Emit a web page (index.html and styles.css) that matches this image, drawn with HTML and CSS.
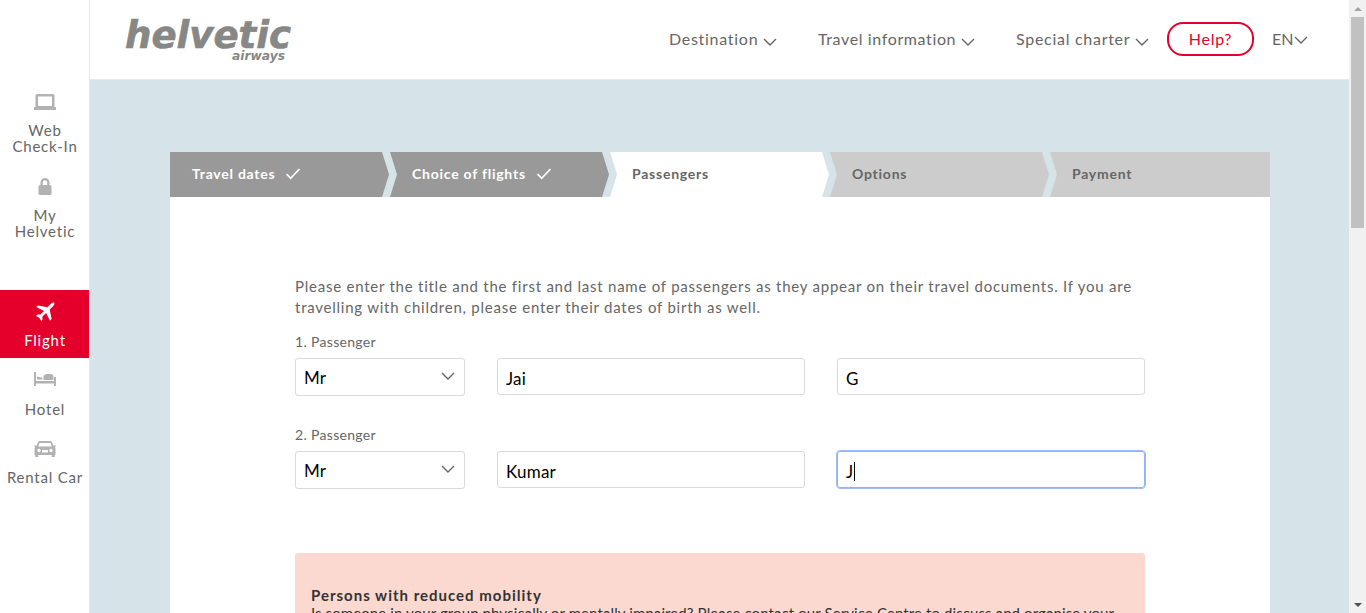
FILE: index.html
```html
<!DOCTYPE html>
<html lang="en">
<head>
<meta charset="utf-8">
<title>Helvetic Airways – Passengers</title>
<link rel="stylesheet" href="styles.css">
</head>
<body>
<div class="app">
  <nav class="sidebar">
    <a class="side-item checkin">
      <svg width="22" height="16" viewBox="0 0 22 16"><path fill="#b2b2b2" fill-rule="evenodd" d="M3 0h16q1.500 0 1.500 1.500V13H22v3H0v-3h1.500V1.500Q1.500 0 3 0zM4 2.500V12h14V2.500z"/></svg>
      <span>Web<br>Check-In</span>
    </a>
    <a class="side-item account">
      <svg width="14" height="17" viewBox="0 0 14 17"><path fill="#b2b2b2" fill-rule="evenodd" d="M2.500 7V4.500a4.500 4.500 0 0 1 9 0V7h.5q1.500 0 1.500 1.500v7Q13.500 17 12 17H2Q.5 17 .5 15.500v-7Q.5 7 2 7zm2.300 0h4.400V4.500a2.200 2.200 0 0 0-4.400 0z"/></svg>
      <span>My<br>Helvetic</span>
    </a>
    <a class="side-item flight">
      <svg width="20" height="20" viewBox="0 0 20 20"><path fill="#fff" d="M19.200.7c.6.8-.2 2.500-1.200 3.600L14.700 7.600l1.900 9.500-1.600 1.600-3.900-7.700-3.700 3.600.1 3-1.300 1.500-1.900-3.300L1 13.900l1.400-1.400 3 .1 3.700-3.700L1.300 5l1.600-1.600 9.500 1.900L15.700 2c1.100-1 2.700-1.900 3.500-1.300z"/></svg>
      <span>Flight</span>
    </a>
    <a class="side-item hotel">
      <svg width="22" height="14" viewBox="0 0 22 14"><path fill="#b2b2b2" d="M0 0h2v9h18V5h2v9h-2v-2.500H2V14H0zM3 4.500l5.500 1.300V7.500H3zM9.500 8V4Q10.500 2 13 2h3.500q3 0 3 3v3z"/></svg>
      <span>Hotel</span>
    </a>
    <a class="side-item rental">
      <svg width="22" height="16" viewBox="0 0 22 16"><path fill="#b2b2b2" fill-rule="evenodd" d="M6 0h10q1.500 0 2 1.300L19.400 4.500H22L21 6.500q.5.700.5 2V14h-.8v2h-3v-2H4.300v2h-3v-2H.5V8.500q0-1.300.5-2L0 4.500h2.600L4 1.300Q4.500 0 6 0zM5.500 2 4.300 5.500h13.400L16.500 2zM5 7.800a1.700 1.700 0 1 0 .01 0zM17 7.800a1.700 1.700 0 1 0 .01 0zM8 9v2.500h6V9z"/></svg>
      <span>Rental Car</span>
    </a>
  </nav>

  <div class="page">
    <header class="topbar">
      <svg class="logo" width="170" height="46" viewBox="0 0 170 46">
        <text class="logo-name" x="0" y="30" textLength="166" lengthAdjust="spacingAndGlyphs">helvetic</text>
        <text class="logo-sub" x="107" y="42" textLength="53" lengthAdjust="spacingAndGlyphs">airways</text>
      </svg>
      <nav class="menu">
        <a class="menu-destination">Destination</a>
        <svg class="chev chev-a" width="14" height="8" viewBox="0 0 14 8"><path d="M1 1l6 6 6-6"/></svg>
        <a class="menu-info">Travel information</a>
        <svg class="chev chev-b" width="14" height="8" viewBox="0 0 14 8"><path d="M1 1l6 6 6-6"/></svg>
        <a class="menu-charter">Special charter</a>
        <svg class="chev chev-c" width="14" height="8" viewBox="0 0 14 8"><path d="M1 1l6 6 6-6"/></svg>
        <a class="help">Help?</a>
        <a class="menu-lang">EN</a>
        <svg class="chev chev-d" width="14" height="8" viewBox="0 0 14 8"><path d="M1 1l6 6 6-6"/></svg>
      </nav>
    </header>

    <main class="card">
      <ol class="steps">
        <li class="step done first"><span>Travel dates</span><svg width="16" height="12" viewBox="0 0 16 12"><path d="M1.500 6 5.700 10.300 14.500 1"/></svg></li>
        <li class="step done"><span>Choice of flights</span><svg width="16" height="12" viewBox="0 0 16 12"><path d="M1.500 6 5.700 10.300 14.500 1"/></svg></li>
        <li class="step current"><span>Passengers</span></li>
        <li class="step"><span>Options</span></li>
        <li class="step last"><span>Payment</span></li>
      </ol>

      <form class="form">
        <p class="intro">Please enter the title and the first and last name of passengers as they appear on their travel documents. If you are<br>travelling with children, please enter their dates of birth as well.</p>
        <div class="label">1. Passenger</div>
        <div class="row">
          <div class="field select">Mr<svg class="chev" width="14" height="8" viewBox="0 0 14 8"><path d="M1 1l6 6 6-6"/></svg></div>
          <div class="field">Jai</div>
          <div class="field">G</div>
        </div>
        <div class="label second">2. Passenger</div>
        <div class="row">
          <div class="field select">Mr<svg class="chev" width="14" height="8" viewBox="0 0 14 8"><path d="M1 1l6 6 6-6"/></svg></div>
          <div class="field">Kumar</div>
          <div class="field focused">J<i class="caret"></i></div>
        </div>
        <section class="notice">
          <h2>Persons with reduced mobility</h2>
          <p>Is someone in your group physically or mentally impaired? Please contact our Service Centre to discuss and organise your</p>
        </section>
      </form>
    </main>
  </div>

  <div class="scrollbar">
    <svg width="8" height="4" viewBox="0 0 8 4"><path fill="#a3a3a3" d="M0 4l4-4 4 4z"/></svg>
    <div class="thumb"></div>
    <svg class="down" width="8" height="4" viewBox="0 0 8 4"><path fill="#505050" d="M0 0l4 4 4-4z"/></svg>
  </div>
</div>
</body>
</html>
```
FILE: styles.css
```css
* { box-sizing: border-box; }
body {
  margin: 0;
  overflow: hidden;
  font-family: Lato, "Liberation Sans", sans-serif;
  color: #666;
}
.app { display: flex; height: 613px; overflow: hidden; background: #fff; }

/* Sidebar */
.sidebar {
  width: 90px;
  flex: none;
  padding-top: 80px;
  border-right: 1px solid #e6e9ea;
  display: flex;
  flex-direction: column;
}
.side-item {
  display: flex;
  flex-direction: column;
  align-items: center;
  text-align: center;
  font-size: 15px;
  line-height: 16px;
  letter-spacing: .8px;
  white-space: nowrap;
}
.side-item svg { flex: none; }
.side-item span { padding-left: 1px; }
.checkin { height: 85px; padding-top: 14px; gap: 12px; }
.account { height: 125px; padding-top: 13px; gap: 12px; }
.flight { height: 68px; padding-top: 12px; gap: 10px; background: #e4002b; color: #fff; }
.hotel { height: 69px; padding-top: 14px; gap: 15px; }
.rental { height: 68px; padding-top: 14px; gap: 12px; }

/* Top bar */
.page { width: 1259px; flex: none; background: #d6e3e8; }
.topbar {
  height: 80px;
  display: flex;
  background: #fff;
  border-bottom: 1px solid #e6e9ea;
}
.logo { margin: 18px 0 0 35px; flex: none; overflow: visible; }
.logo text {
  font-family: "DejaVu Sans", sans-serif;
  font-weight: 700;
  font-style: italic;
  fill: #878785;
}
.logo-name { font-size: 37px; stroke: #878785; stroke-width: .6; }
.logo-sub { font-size: 12px; }
.menu {
  display: flex;
  align-items: center;
  height: 77px;
  margin-left: 374px;
  font-size: 16px;
  letter-spacing: .72px;
  white-space: nowrap;
}
.menu a { flex: none; }
.chev { flex: none; fill: none; stroke: #666; stroke-width: 1.4; }
.menu .chev { margin-top: 6px; }
.menu-destination { width: 94px; }
.chev-a { margin-right: 41px; }
.menu-info { width: 143px; letter-spacing: .62px; }
.chev-b { margin-right: 41px; }
.menu-charter { width: 119px; }
.chev-c { margin-right: 18px; }
.menu .help {
  width: 87px;
  height: 34px;
  margin-right: 18px;
  border: 2px solid #e4002b;
  border-radius: 16px;
  color: #e4002b;
  text-align: center;
  line-height: 29px;
}
.menu-lang { width: 22px; letter-spacing: 0; }
.menu .chev-d { margin-top: 3px; }

/* Booking card */
.card { width: 1100px; height: 533px; margin: 72px 0 0 80px; background: #fff; }
.steps {
  display: flex;
  height: 45px;
  margin: 0;
  padding: 0;
  list-style: none;
  background: #d6e3e8;
}
.step {
  width: 220px;
  padding: 0 0 2px 22px;
  display: flex;
  align-items: center;
  gap: 10px;
  font-size: 14px;
  font-weight: 700;
  letter-spacing: .76px;
  background: #ccc;
  clip-path: polygon(0 0, 212px 0, 219px 50%, 212px 100%, 0 100%, 7px 50%);
}
.step.first { clip-path: polygon(0 0, 212px 0, 219px 50%, 212px 100%, 0 100%); }
.step.last { clip-path: polygon(0 0, 100% 0, 100% 100%, 0 100%, 7px 50%); }
.step.done { background: #999; color: #fff; }
.step.current { background: #fff; }
.step svg { fill: none; stroke: #fff; stroke-width: 1.7; }

/* Passenger form */
.form { padding: 79px 125px 0; }
.intro {
  margin: 0;
  font-size: 15px;
  line-height: 21px;
  letter-spacing: .76px;
  white-space: nowrap;
}
.label {
  height: 40px;
  padding-top: 14px;
  font-size: 14px;
  line-height: 20px;
  letter-spacing: .32px;
}
.label.second { height: 39px; padding-top: 13px; margin-top: 16px; }
.row {
  display: grid;
  grid-template-columns: 170px 308px 308px;
  gap: 32px;
  height: 38px;
  align-items: start;
}
.field {
  height: 37px;
  padding: 3px 8px 0;
  display: flex;
  align-items: center;
  border: 1px solid #dadada;
  border-radius: 3px;
  color: #000;
  font-size: 17px;
  letter-spacing: .2px;
}
.select { height: 38px; padding-top: 1px; justify-content: space-between; }
.select .chev { margin: -4px 1px 0 0; }
.focused { border-color: #8fb4f5; outline: 1px solid #9dbcf5; }
.caret { width: 1px; height: 19px; margin-left: 1px; background: #000; }
.notice {
  height: 120px;
  margin-top: 64px;
  padding: 33px 16px 0;
  border-radius: 3px;
  background: #fbd9d0;
  color: #333;
  white-space: nowrap;
}
.notice h2 { margin: 0; font-size: 15px; line-height: 18px; letter-spacing: 1px; }
.notice p { margin: 0; font-size: 15px; line-height: 19px; letter-spacing: .1px; }

/* Scrollbar */
.scrollbar {
  width: 17px;
  flex: none;
  display: flex;
  flex-direction: column;
  align-items: center;
  padding: 7px 0 6px;
  background: #f1f1f1;
}
.thumb { width: 13px; height: 211px; margin-top: 6px; background: #c1c1c1; }
.down { margin-top: auto; }
```
